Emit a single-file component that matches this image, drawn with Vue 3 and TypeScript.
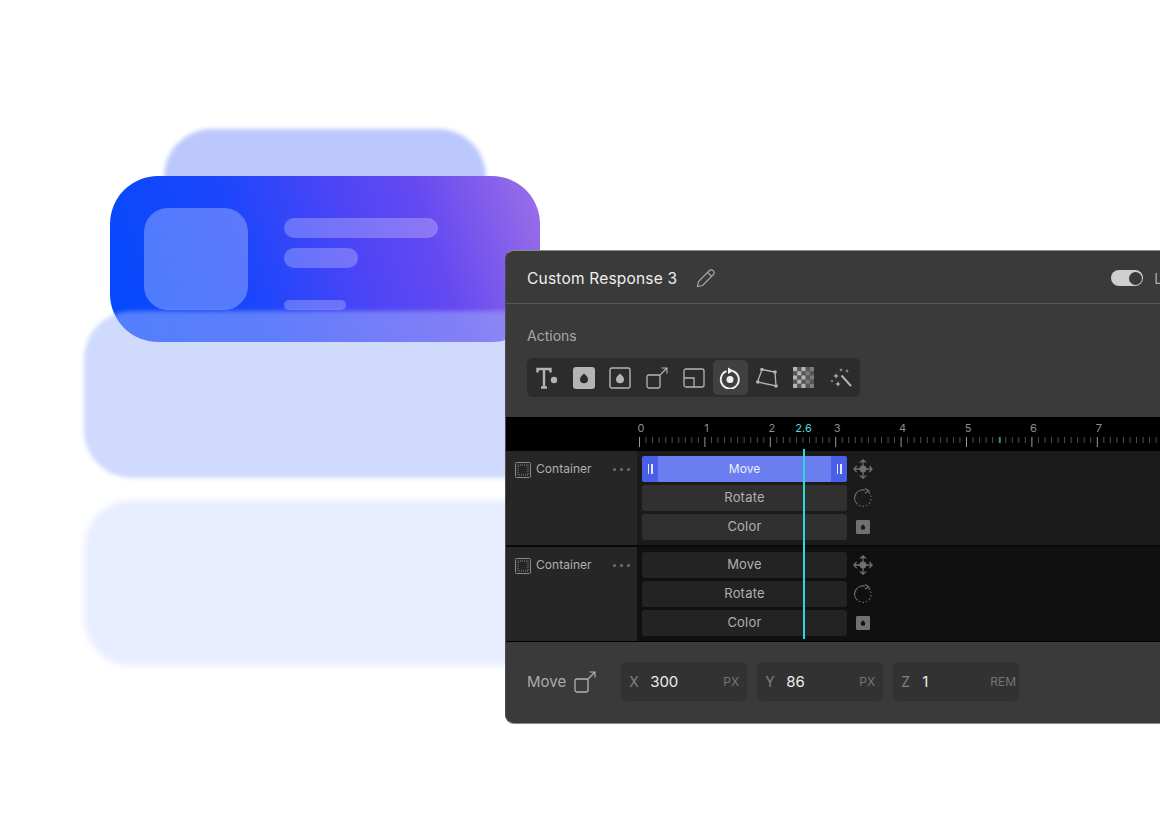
<script setup lang="ts">
const tools = ['type', 'fill', 'outline', 'move', 'resize', 'rotate', 'skew', 'opacity', 'magic'];

const groups = [
  { id: 1, dark: false, clips: [
    { name: 'Move', icon: 'move', active: true },
    { name: 'Rotate', icon: 'rotate', active: false },
    { name: 'Color', icon: 'fill', active: false },
  ] },
  { id: 2, dark: true, clips: [
    { name: 'Move', icon: 'move', active: false },
    { name: 'Rotate', icon: 'rotate', active: false },
    { name: 'Color', icon: 'fill', active: false },
  ] },
];

const fields = [
  { axis: 'X', value: '300', unit: 'PX' },
  { axis: 'Y', value: '86', unit: 'PX' },
  { axis: 'Z', value: '1', unit: 'REM' },
];

// ruler: 65.4px per second, 10 ticks each
const origin = 133.5;
const step = 6.54;
const ticks = Array.from({ length: 80 }, (_, i) => ({ x: origin + i * step, major: i % 10 === 0 }));
const labels = Array.from({ length: 8 }, (_, i) => ({ n: i, x: origin + 1.5 + i * 65.4 }));

// checker squares of the opacity icon
const checker: { x: number; y: number; o: number }[] = [];
for (let r = 0; r < 5; r++) {
  for (let c = 0; c < 5; c++) {
    if ((r + c) % 2 === 0) checker.push({ x: c * 4, y: r * 4, o: c > 2 ? 0.6 : 1 });
    else checker.push({ x: c * 4, y: r * 4, o: 0.32 });
  }
}
</script>

<template>
  <div class="stage">
    <svg class="sprites" width="0" height="0" aria-hidden="true">
      <symbol id="i-type" viewBox="0 0 22 22">
        <path d="M1.500 5.500V2h13v3.500M8 2v18.500M5 20.500h6" fill="none" stroke="currentColor" stroke-width="2.400" />
        <circle cx="18" cy="13" r="3.200" fill="currentColor" />
      </symbol>
      <symbol id="i-fill" viewBox="0 0 22 22">
        <path fill-rule="evenodd" fill="currentColor" d="M3 0h16a3 3 0 0 1 3 3v16a3 3 0 0 1-3 3H3a3 3 0 0 1-3-3V3a3 3 0 0 1 3-3Zm8 6.500c-2 2-4 3.700-4 5.800a4 4 0 0 0 8 0c0-2.100-2-3.800-4-5.800Z" />
      </symbol>
      <symbol id="i-dot" viewBox="0 0 22 22">
        <path fill-rule="evenodd" fill="currentColor" d="M2 0h18a2 2 0 0 1 2 2v18a2 2 0 0 1-2 2H2a2 2 0 0 1-2-2V2a2 2 0 0 1 2-2Zm9 6.500c-2 2-3.500 3.500-3.500 5.500a3.500 3.500 0 0 0 7 0c0-2-1.500-3.500-3.500-5.500Z" />
      </symbol>
      <symbol id="i-outline" viewBox="0 0 22 22">
        <rect x="1" y="1" width="20" height="20" rx="2" fill="none" stroke="currentColor" stroke-width="1.400" />
        <path fill="currentColor" d="M11 6.500c-2 2-4 3.700-4 5.800a4 4 0 0 0 8 0c0-2.100-2-3.800-4-5.800Z" />
      </symbol>
      <symbol id="i-move" viewBox="0 0 22 22">
        <rect x="1" y="8" width="13" height="13" rx="2" fill="none" stroke="currentColor" stroke-width="1.300" />
        <path d="M13 9l8-8M15.500 1H21v5.500" fill="none" stroke="currentColor" stroke-width="1.100" />
      </symbol>
      <symbol id="i-resize" viewBox="0 0 22 22">
        <rect x="1" y="2" width="20" height="18" rx="2" fill="none" stroke="currentColor" stroke-width="1.300" />
        <path d="M1 11h10v9" fill="none" stroke="currentColor" stroke-width="1.300" />
      </symbol>
      <symbol id="i-rotate" viewBox="0 0 22 22">
        <path d="M13.500 4a9 9 0 1 1-6 .2" fill="none" stroke="currentColor" stroke-width="1.900" />
        <path d="M9 0.500l5.500 3.300L9 7Z" fill="currentColor" />
        <circle cx="11" cy="12.600" r="3.500" fill="currentColor" />
      </symbol>
      <symbol id="i-skew" viewBox="0 0 22 22">
        <path d="M6 2.500l13 2.500 1 14L1.500 15Z" fill="none" stroke="currentColor" stroke-width="1.300" />
        <circle cx="6" cy="2.500" r="1.800" fill="currentColor" />
        <circle cx="19" cy="5" r="1.800" fill="currentColor" />
        <circle cx="20" cy="19" r="1.800" fill="currentColor" />
        <circle cx="1.800" cy="15" r="1.800" fill="currentColor" />
      </symbol>
      <symbol id="i-magic" viewBox="0 0 22 22">
        <path d="M11.500 8.500L21 19" fill="none" stroke="currentColor" stroke-width="2" />
        <path fill="currentColor" d="M6 6l.8 2.200L9 9l-2.200.8L6 12l-.8-2.200L3 9l2.200-.8ZM8 14l.8 2.200L11 17l-2.200.8L8 20l-.8-2.200L5 17l2.200-.8ZM2 12.500l.4 1.100 1.100.4-1.100.4L2 15.500l-.4-1.100L.5 14l1.100-.4ZM11 1l.5 1.500L13 3l-1.500.5L11 5l-.5-1.500L9 3l1.500-.5ZM17 2l.5 1.500L19 4l-1.500.5L17 6l-.5-1.500L15 4l1.500-.5Z" />
      </symbol>
      <symbol id="i-handle" viewBox="0 0 22 22">
        <path d="M11 1v20M1 11h20M7.500 4L11 1l3.500 3M7.500 18l3.500 3 3.500-3M4 7.500L1 11l3 3.500M18 7.500L21 11l-3 3.500" fill="none" stroke="currentColor" stroke-width="1.400" />
        <circle cx="11" cy="11" r="3.800" fill="currentColor" />
      </symbol>
      <symbol id="i-orbit" viewBox="0 0 22 22">
        <path d="M13 2.400A9 9 0 0 0 5 18" fill="none" stroke="currentColor" stroke-width="1.300" />
        <path d="M6.500 19a9 9 0 0 0 13.500-8A9 9 0 0 0 17 4.500" fill="none" stroke="currentColor" stroke-width="1.300" stroke-dasharray="1.500 2.500" />
        <path d="M13.500 .5l4 3-4.500 2" fill="none" stroke="currentColor" stroke-width="1.300" />
      </symbol>
    </svg>

    <div class="blob blob-back"></div>
    <div class="blob blob-low"></div>

    <div class="card">
      <div class="card-thumb"></div>
      <div class="card-lines">
        <span class="line line-a"></span>
        <span class="line line-b"></span>
        <span class="line line-c"></span>
      </div>
    </div>

    <div class="blob blob-mid"></div>

    <section class="panel">
      <header class="panel-head">
        <span class="title">Custom Response 3</span>
        <svg class="pencil" width="20" height="20" viewBox="0 0 20 20">
          <path d="M1.500 18.500l1-5L13.500 2.500a2.300 2.300 0 0 1 3.300 0l.7.700a2.300 2.300 0 0 1 0 3.300L6.500 17.500ZM11.500 4.500l4 4" fill="none" stroke="currentColor" stroke-width="1.200" />
        </svg>
        <span class="spacer"></span>
        <span class="toggle"><i></i></span>
        <span class="toggle-label">L</span>
      </header>

      <div class="actions">
        <div class="actions-label">Actions</div>
        <div class="toolbar">
          <button v-for="t in tools" :key="t" class="tool" :class="{ on: t === 'rotate' }">
            <svg v-if="t === 'opacity'" width="21" height="21" viewBox="0 0 20 20">
              <rect v-for="(s, i) in checker" :key="i" :x="s.x" :y="s.y" width="4" height="4" fill="#b4b4b4" :opacity="s.o" />
            </svg>
            <svg v-else width="22" height="22"><use :href="`#i-${t}`" /></svg>
          </button>
        </div>
      </div>

      <div class="timeline">
        <svg class="ruler" width="654" height="34">
          <text v-for="l in labels" :key="l.n" :x="l.x" y="15" text-anchor="middle" class="ruler-num">{{ l.n }}</text>
          <text x="297.500" y="15" text-anchor="middle" class="ruler-now">2.6</text>
          <line v-for="(t, i) in ticks" :key="i" :x1="t.x" :x2="t.x" y1="20" :y2="t.major ? 30 : 26" :stroke="t.major ? '#9a9a9a' : '#505050'" />
          <line x1="494" x2="494" y1="20" y2="26" stroke="#5fe0dc" />
        </svg>

        <div v-for="g in groups" :key="g.id" class="group" :class="{ dark: g.dark }">
          <div class="layer">
            <svg width="16" height="16" viewBox="0 0 16 16" class="layer-icon">
              <rect x=".5" y=".5" width="15" height="15" rx="1" fill="none" stroke="currentColor" />
              <rect x="3" y="3" width="10" height="10" fill="none" stroke="currentColor" stroke-dasharray="1 1" />
            </svg>
            <span class="layer-name">Container</span>
            <span class="dots"><i></i><i></i><i></i></span>
          </div>
          <div class="clips">
            <div v-for="c in g.clips" :key="c.name" class="clip-row">
              <div class="clip" :class="{ active: c.active }">
                <span v-if="c.active" class="grip"><i></i><i></i></span>
                <span class="clip-name">{{ c.name }}</span>
                <span v-if="c.active" class="grip"><i></i><i></i></span>
              </div>
              <svg class="clip-icon" width="20" height="20" viewBox="0 0 20 20">
                <use v-if="c.icon === 'move'" href="#i-handle" />
                <use v-else-if="c.icon === 'rotate'" href="#i-orbit" />
                <use v-else href="#i-dot" x="3" y="3" width="14" height="14" />
              </svg>
            </div>
          </div>
        </div>

        <div class="playhead"></div>
      </div>

      <footer class="panel-foot">
        <span class="foot-label">Move</span>
        <svg class="foot-icon" width="22" height="22"><use href="#i-move" /></svg>
        <div class="fields">
          <div v-for="f in fields" :key="f.axis" class="field">
            <span class="axis">{{ f.axis }}</span>
            <span class="val">{{ f.value }}</span>
            <span class="unit">{{ f.unit }}</span>
          </div>
        </div>
      </footer>
    </section>
  </div>
</template>

<style scoped>
.stage {
  position: relative;
  width: 1160px;
  height: 816px;
  overflow: hidden;
  background: #fff;
  font-family: Inter, "Liberation Sans", sans-serif;
}
.sprites { position: absolute; }

.blob {
  position: absolute;
  border-radius: 48px;
  filter: blur(2px);
}
.blob-back { left: 164px; top: 129px; width: 322px; height: 166px; background: #bcc8fd; }
.blob-mid {
  left: 84px;
  top: 311px;
  width: 470px;
  height: 167px;
  background: rgba(159, 181, 251, 0.5);
}
.blob-low { left: 84px; top: 500px; width: 470px; height: 166px; background: #e8eeff; filter: blur(3px); }

.card {
  position: absolute;
  left: 110px;
  top: 176px;
  width: 430px;
  height: 166px;
  box-sizing: border-box;
  padding: 32px 34px;
  border-radius: 48px;
  background: linear-gradient(72deg, #0349fd 0%, #1c46fb 33%, #4f45f6 58%, #6449f1 73%, #9c70e6 100%);
  display: flex;
  gap: 36px;
}
.card-thumb {
  width: 104px;
  height: 102px;
  border-radius: 24px;
  background: rgba(255, 255, 255, 0.28);
}
.card-lines {
  display: flex;
  flex-direction: column;
  align-items: flex-start;
  padding-top: 10px;
}
.line { display: block; height: 20px; border-radius: 10px; background: rgba(255, 255, 255, 0.25); }
.line-a { width: 154px; }
.line-b { width: 74px; margin-top: 10px; }
.line-c { width: 62px; height: 10px; margin-top: 32px; }

.panel {
  position: absolute;
  left: 505px;
  top: 250px;
  width: 760px;
  border: 1px solid #8a8a8a;
  border-left-color: #4c4c4c;
  border-radius: 9px 0 0 9px;
  background: #3a3a3a;
  overflow: hidden;
  color: #aaa;
}
.panel-head {
  height: 53px;
  box-sizing: border-box;
  display: flex;
  align-items: center;
  padding: 2px 0 0 21px;
  border-bottom: 1px solid #585858;
}
.title { font-size: 15.500px; letter-spacing: .2px; color: #eee; }
.pencil { margin-left: 19px; color: #a8a8a8; }
.spacer { width: 397px; }
.toggle {
  display: flex;
  justify-content: flex-end;
  align-items: center;
  width: 32px;
  height: 16px;
  margin-left: -2px;
  border-radius: 8px;
  background: #cfcfcf;
  padding: 0 1.500px;
  box-sizing: border-box;
}
.toggle i { width: 13px; height: 13px; border-radius: 50%; background: #3a3a3a; }
.toggle-label { margin-left: 11px; font-size: 14px; color: #aaa; }

.actions { height: 113px; box-sizing: border-box; padding: 23px 0 0 21px; }
.actions-label { font-size: 14px; line-height: 17px; color: #a8a8a8; }
.toolbar {
  display: inline-flex;
  gap: 1.700px;
  margin-top: 14px;
  padding: 2px 1.900px 2px 2.500px;
  height: 39px;
  box-sizing: border-box;
  border-radius: 6px;
  background: #2c2c2c;
}
.tool {
  width: 35px;
  height: 35px;
  display: flex;
  align-items: center;
  justify-content: center;
  padding: 0;
  border: 0;
  border-radius: 5px;
  background: none;
  color: #b4b4b4;
}
.tool.on { background: #404040; color: #f2f2f2; }

.timeline { position: relative; background: #000; }
.ruler { display: block; }
.ruler-num { font-size: 11px; fill: #8e8e8e; font-family: Inter, sans-serif; }
.ruler-now { font-size: 11px; fill: #55d8d8; font-family: Inter, sans-serif; }

.group {
  display: flex;
  height: 94px;
  border-bottom: 2px solid #0a0a0a;
  background: #1b1b1b;
}
.group.dark { background: #101010; border-bottom: 1px solid #000; }
.layer {
  width: 131px;
  flex: none;
  box-sizing: border-box;
  padding: 11px 7px 0 9px;
  display: flex;
  align-items: flex-start;
  background: #262626;
  color: #a0a0a0;
}
.layer-icon { color: #8a8a8a; flex: none; }
.layer-name { margin-left: 5px; font-size: 12px; line-height: 14px; letter-spacing: .04px; color: #b0b0b0; }
.dots { display: flex; gap: 4px; margin: 6px 0 0 auto; }
.dots i { width: 3px; height: 3px; border-radius: 50%; background: #707070; }

.clips { padding: 5px 0 0 5px; display: flex; flex-direction: column; gap: 3px; }
.clip-row { display: flex; align-items: center; gap: 6px; }
.clip {
  width: 205px;
  height: 26px;
  box-sizing: border-box;
  border-radius: 3px;
  background: #303030;
  display: flex;
  align-items: center;
  justify-content: center;
  font-size: 13px;
  letter-spacing: .2px;
  color: #b0b0b0;
}
.clip-name { margin-top: -2px; }
.dark .clip { background: #232323; }
.clip.active {
  justify-content: space-between;
  background: #6a7ef0;
  color: #eef0ff;
  font-size: 12px;
  letter-spacing: 0;
}
.grip {
  width: 16px;
  height: 100%;
  display: flex;
  align-items: center;
  justify-content: center;
  gap: 2px;
  background: #4a5fe8;
  border-radius: 3px 0 0 3px;
}
.grip:last-child { border-radius: 0 3px 3px 0; }
.grip i { width: 1.500px; height: 10px; background: #e4e8ff; }
.clip-icon { color: #707070; }

.playhead {
  position: absolute;
  left: 296.500px;
  top: 32px;
  bottom: 3px;
  width: 2px;
  background: #2fd8d8;
}

.panel-foot {
  height: 81px;
  box-sizing: border-box;
  padding: 0 0 2px 21px;
  display: flex;
  align-items: center;
}
.foot-label { font-size: 15px; color: #aaa; }
.foot-icon { margin-left: 8px; color: #b4b4b4; }
.fields { display: flex; gap: 10px; margin-left: 25px; }
.field {
  width: 126px;
  height: 39px;
  box-sizing: border-box;
  padding: 0 8px;
  display: flex;
  align-items: center;
  border-radius: 5px;
  background: #323232;
}
.axis { width: 21px; font-size: 14px; color: #808080; }
.val { font-size: 15px; color: #eee; }
.unit { margin-left: auto; font-size: 12px; color: #757575; }
.field:last-child .unit { margin-right: -5px; }
</style>

<style>
html, body { margin: 0; background: #fff; }
</style>
